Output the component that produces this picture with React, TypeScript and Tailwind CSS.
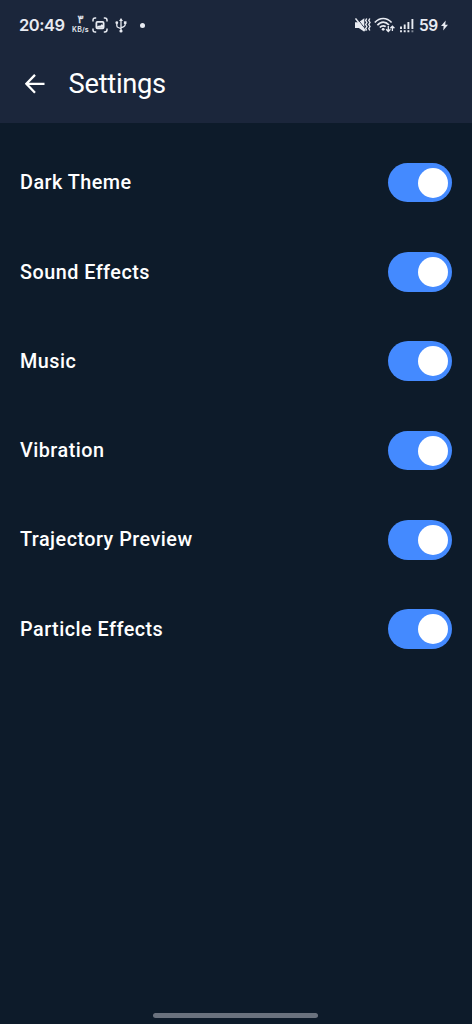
const settings = [
  "Dark Theme",
  "Sound Effects",
  "Music",
  "Vibration",
  "Trajectory Preview",
  "Particle Effects",
];

function StatusBar() {
  return (
    <div className="flex h-[50px] items-center justify-between pl-[19px] pr-[24px] text-[#e8ebf2]">
      <div className="flex items-center">
        <span className="w-[47px] whitespace-nowrap font-['Inter',sans-serif] text-[16.5px] font-semibold leading-5 tracking-[-0.5px]">20:49</span>
        <div className="ml-[5px] flex w-[19px] flex-col items-center">
          <span className="h-[10px] font-['DejaVu_Sans',sans-serif] text-[11px] font-normal leading-[8px] [-webkit-text-stroke:0.3px_currentColor]">٣</span>
          <span className="whitespace-nowrap font-['Inter',sans-serif] text-[7px] font-semibold leading-[8px] tracking-[0.2px]">KB/s</span>
        </div>
        <svg className="ml-[2px] h-4 w-4" viewBox="0 0 16 16" fill="none" stroke="currentColor" strokeWidth="1.5">
          <path d="M1 4.5V3.2Q1 1 3.2 1H4.2M11.8 1h1Q15 1 15 3.2V4.5M15 11.5v1.3q0 2.2-2.2 2.2h-1M4.2 15H3.2Q1 15 1 12.8V11.5" />
          <path d="M5.4 4.9h5.2q1 0 1 1v4.4q0 1-1 1H5.4q-1 0-1-1v-4.4q0-1 1-1Z" strokeWidth="1.8" />
          <path d="M5 10.8V9.4L7 8.5l1.2.3L9.6 7.2l1.6 1v2.6Z" fill="currentColor" stroke="none" />
        </svg>
        <svg className="ml-[7px] h-[15px] w-[12px]" viewBox="0 0 12 15" fill="none" stroke="currentColor" strokeWidth="1.3">
          <path d="M6 13V2M1.8 5v2.4Q1.8 9 3.2 9.5L6 10.7M10.2 5v1.6q0 1.4-1.4 2L6 9.8" />
          <path d="m6 0 2 3H4Z" fill="currentColor" stroke="none" />
          <circle cx="1.8" cy="4.7" r="1.4" fill="currentColor" stroke="none" />
          <path d="M8.9 3.3h2.6v2.6H8.9z" fill="currentColor" stroke="none" />
          <circle cx="6" cy="13" r="1.6" fill="currentColor" stroke="none" />
        </svg>
        <span className="ml-[13px] h-[5px] w-[5px] rounded-full bg-current" />
      </div>

      <div className="flex items-center">
        <svg className="h-4 w-[17px]" viewBox="0 0 17 16" fill="none" stroke="currentColor">
          <path d="M0 5.3h3.8L9.3 1.2v13.6L3.8 11H0Z" fill="currentColor" stroke="none" />
          <path d="m1.5 .7 9 11.6" stroke="#1b263b" strokeWidth="1" />
          <path d="m.5 1.4 9.8 12.4" strokeWidth="1.5" />
          <path d="m11.7 1.5-1 2 1.2 2-1.2 2 1.2 2-1.2 2 1 2M14.8 1.5l-1 2 1.2 2-1.2 2 1.2 2-1.2 2 1 2" strokeWidth="1.4" />
        </svg>
        <svg className="ml-[2px] h-4 w-[21px]" viewBox="0 0 21 16" fill="none" stroke="currentColor" strokeWidth="1.7">
          <path d="M.8 5.5Q4.5 1.5 9.2 1.5t8.4 4M3.4 8.3Q6 5.1 9.2 5.1t5.8 2.9M5.9 10.6Q7.2 8.8 9.2 8.8q1.5 0 2.5.9" />
          <circle cx="9.2" cy="12.3" r="1.4" fill="currentColor" stroke="none" />
          <path d="M14.3 9v5.3M12.2 12.3l2.1 2.2 2.1-2.2M18.4 14V9.3M16.4 11.3l2-2.2 2 2.2" strokeWidth="1.3" />
        </svg>
        <svg className="ml-[5px] h-[15px] w-[14px]" viewBox="0 0 14 15" fill="none" stroke="currentColor" strokeWidth="1.9">
          <path d="M1 8.5V11M4.7 6.5V11M8.4 4V11M12.4 1V11M1 12.3v2M4.7 12.3v2M8.4 12.3v2" />
          <path d="M12.4 12.3v2" opacity=".5" />
        </svg>
        <span className="ml-[5px] w-[19px] whitespace-nowrap pt-px font-['Inter',sans-serif] text-[15.5px] font-semibold leading-5 tracking-[-0.4px]">59</span>
        <svg className="ml-[3px] h-[11px] w-[7px]" viewBox="0 0 7 11" fill="currentColor">
          <path d="M4.7 .5 0 6.1h2.6L2.2 10.5 7 4.7H4.2Z" />
        </svg>
      </div>
    </div>
  );
}

function Toggle() {
  return (
    <button
      type="button"
      role="switch"
      aria-checked="true"
      className="flex h-[39.5px] w-[63.7px] items-center justify-end rounded-full bg-[#448aff] pr-[4.5px]"
    >
      <span className="h-[30px] w-[30px] shrink-0 rounded-full bg-white" />
    </button>
  );
}

export default function App() {
  return (
    <div className="flex h-[1024px] w-[472px] flex-col overflow-hidden bg-[#0d1b2a] font-['Roboto',sans-serif] text-white">
      <header className="h-[123px] bg-[#1b263b]">
        <StatusBar />
        <div className="flex h-[67px] items-center pl-[25px]">
          <svg className="h-5 w-5" viewBox="0 0 20 20" fill="none" stroke="currentColor" strokeWidth="2.3">
            <path d="M19.5 9.8H1.8M10 .9 1.4 9.8l8.6 8.9" />
          </svg>
          <h1 className="ml-[23.6px] text-[27.3px] font-normal leading-8 tracking-[-0.3px]">Settings</h1>
        </div>
      </header>

      <main className="flex-1 pt-[15px]">
        {settings.map((label) => (
          <div key={label} className="flex h-[89.3px] items-center justify-between px-5">
            <span className="pt-px text-[19.8px] font-medium tracking-[0.48px]">{label}</span>
            <Toggle />
          </div>
        ))}
      </main>

      {/* Gesture bar */}
      <div className="flex h-[11.5px] pl-[153.4px]">
        <div className="h-[5px] w-[165px] rounded-full bg-[#6a727e]" />
      </div>
    </div>
  );
}
